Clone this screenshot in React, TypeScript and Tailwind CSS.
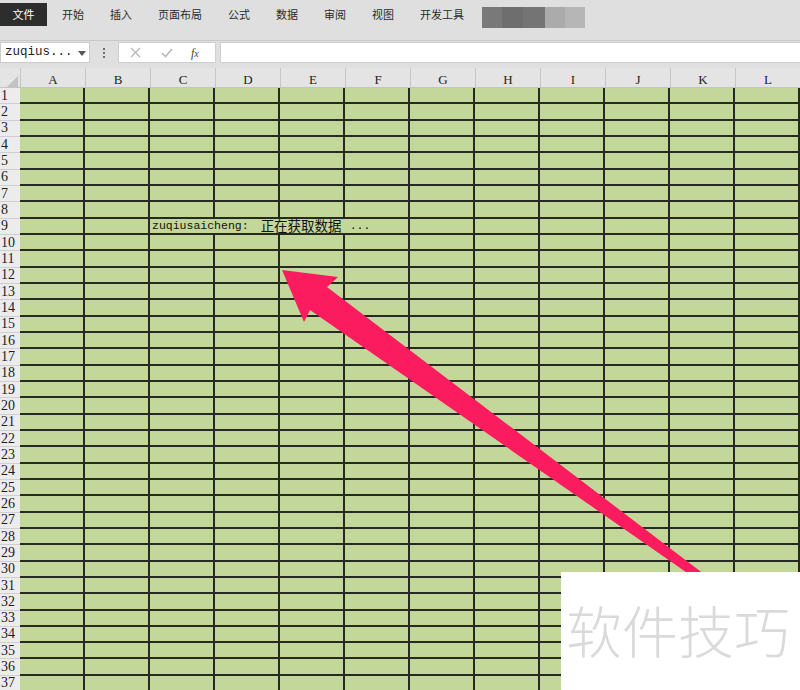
import React from 'react';

const COLS = ['A', 'B', 'C', 'D', 'E', 'F', 'G', 'H', 'I', 'J', 'K', 'L'];
const MENU = ['开始', '插入', '页面布局', '公式', '数据', '审阅', '视图', '开发工具'];
const ROWS = Array.from({ length: 37 }, (_, i) => i + 1);

function Cell({ row, col }: { row: number; col: number }) {
  const spill = row === 9 && col >= 2 && col <= 4;
  const base = 'bg-[#c4d79b] border-b-2 border-[#262a22]';
  if (row === 9 && col === 2) {
    return (
      <div className={`${base} relative z-10 flex items-center pl-[2px] whitespace-nowrap text-[#111]`}>
        <span className="font-['Liberation_Mono',monospace] text-[11.5px]">zuqiusaicheng:</span>
        <span className="ml-[12px] font-['Noto_Sans_CJK_SC',sans-serif] text-[13.5px] leading-none">正在获取数据</span>
        <span className="ml-[8px] font-['Liberation_Mono',monospace] text-[11.5px]">...</span>
      </div>
    );
  }
  return <div className={`${base} ${spill ? '' : 'border-r-2'}`} />;
}

export default function App() {
  return (
    <div className="relative w-[800px] h-[690px] overflow-hidden bg-[#dfdfdf] font-['Noto_Sans_CJK_SC',sans-serif]">
      {/* menu bar */}
      <div className="h-[41px] flex items-start border-b border-[#c9c9c9]">
        <div className="mt-[3px] w-[47px] h-[23px] bg-[#2d2d2d] text-white text-[11px] flex items-center justify-center">
          文件
        </div>
        <div className="mt-[3px] ml-[15px] h-[23px] flex items-center gap-[26px] text-[11px] text-[#2a2a2a]">
          {MENU.map((m) => (
            <span key={m}>{m}</span>
          ))}
        </div>
        <div className="ml-[18px] mt-[7px] h-[21px] flex">
          <div className="w-[20px] bg-[#797979]" />
          <div className="w-[21px] bg-[#6e6e6e]" />
          <div className="w-[22px] bg-[#747474]" />
          <div className="w-[20px] bg-[#ababab]" />
          <div className="w-[20px] bg-[#b6b6b6]" />
        </div>
      </div>

      {/* formula bar */}
      <div className="h-[27px] flex items-start">
        <div className="mt-[1px] w-[90px] h-[21px] bg-white border border-[#cbcbcb] flex items-center pl-[4px] relative">
          <span className="font-['Liberation_Mono',monospace] text-[12.5px] text-[#1e1e1e]">zuqius...</span>
          <svg className="absolute left-[77px] top-[8px]" width="8" height="5" viewBox="0 0 8 5">
            <path d="M0 0 L8 0 L4 5 Z" fill="#555" />
          </svg>
        </div>
        <div className="w-[28px] h-[23px] flex flex-col items-center justify-center gap-[2px]">
          <div className="w-[2px] h-[2px] bg-[#6f6f6f]" />
          <div className="w-[2px] h-[2px] bg-[#6f6f6f]" />
          <div className="w-[2px] h-[2px] bg-[#6f6f6f]" />
        </div>
        <div className="mt-[1px] w-[98px] h-[21px] bg-white border border-[#cfcfcf] flex items-center">
          <svg className="ml-[11px]" width="11" height="11" viewBox="0 0 11 11">
            <path d="M1 1 L10 10 M10 1 L1 10" stroke="#b8b8b8" strokeWidth="1.3" />
          </svg>
          <svg className="ml-[20px]" width="12" height="10" viewBox="0 0 12 10">
            <path d="M1 5 L4.5 8.5 L11 1" stroke="#b8b8b8" strokeWidth="1.6" fill="none" />
          </svg>
          <span className="ml-[18px] font-['Liberation_Serif',serif] italic text-[12px] text-[#444] leading-none">
            f<span className="text-[10px]">x</span>
          </span>
        </div>
        <div className="mt-[1px] ml-[4px] flex-1 h-[21px] bg-white border-y border-l border-[#cfcfcf]" />
      </div>

      {/* column header */}
      <div className="h-[20px] flex bg-[#e4e4e4] border-b border-[#c4c4c4]">
        <div className="w-[20px] relative">
          <svg className="absolute left-[7px] top-[8px]" width="11" height="11" viewBox="0 0 11 11">
            <path d="M11 0 L11 11 L0 11 Z" fill="#c2c2c2" />
          </svg>
        </div>
        {COLS.map((c) => (
          <div
            key={c}
            className="w-[65px] border-l border-[#c6c6c6] flex items-end justify-center pb-[1px] font-['Liberation_Serif',serif] text-[13px] leading-none text-[#222]"
          >
            {c}
          </div>
        ))}
      </div>

      {/* grid */}
      <div className="grid grid-cols-[20px_repeat(12,65px)] auto-rows-[16.333px]">
        {ROWS.map((r) => (
          <React.Fragment key={r}>
            <div className="bg-[#ececec] border-b border-[#cfcfcf] flex items-center pl-[1px] font-['Liberation_Serif',serif] text-[14px] leading-none text-[#1c1c1c]">
              {r}
            </div>
            {COLS.map((c, ci) => (
              <Cell key={c} row={r} col={ci} />
            ))}
          </React.Fragment>
        ))}
      </div>

      {/* arrow */}
      <svg className="absolute left-0 top-0 pointer-events-none z-20" width="800" height="690" viewBox="0 0 800 690">
        <defs>
          <filter id="soft" x="-10%" y="-10%" width="120%" height="120%">
            <feGaussianBlur stdDeviation="0.6" />
          </filter>
        </defs>
        <polygon
          points="282,270 338,277 327,287 738,600 726,600 310,310 304,322"
          fill="#fb1d5e"
          filter="url(#soft)"
        />
      </svg>

      {/* watermark */}
      <div className="absolute left-[561px] top-[572px] w-[239px] h-[118px] bg-white z-30">
        <div className="mt-[29px] ml-[5px] text-[56px] leading-none text-[#dadada] font-['Noto_Sans_CJK_SC',sans-serif] font-light whitespace-nowrap">
          软件技巧
        </div>
      </div>
    </div>
  );
}
